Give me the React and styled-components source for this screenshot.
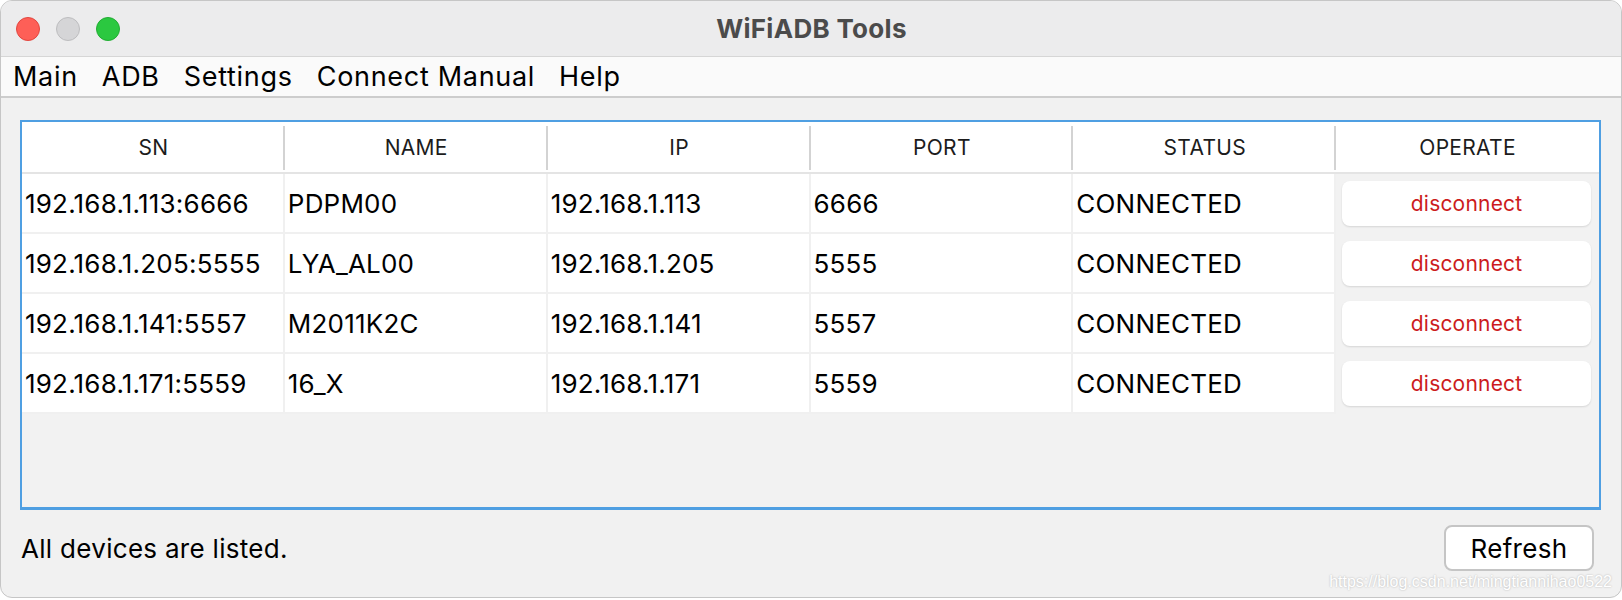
import styled, { createGlobalStyle } from "styled-components";

const GlobalStyle = createGlobalStyle`
  html, body {
    margin: 0;
    padding: 0;
    background: #ffffff;
  }
  * {
    box-sizing: border-box;
  }
`;

const Window = styled.div`
  position: relative;
  width: 1622px;
  height: 598px;
  display: flex;
  flex-direction: column;
  background: #f1f1f1;
  border: 1px solid #c6c6c6;
  border-radius: 12px;
  overflow: hidden;
  font-family: "Inter", "Noto Sans", sans-serif;
  color: #000;
`;

const TitleBar = styled.div`
  height: 56px;
  display: grid;
  grid-template-columns: 1fr auto 1fr;
  align-items: center;
  background: #ececed;
  border-bottom: 1px solid #d6d6d6;
  padding-left: 15px;
`;

const Lights = styled.div`
  display: flex;
  gap: 16px;
`;

const Light = styled.span`
  width: 24px;
  height: 24px;
  border-radius: 50%;
  background: ${p => p.$bg};
  border: 1px solid ${p => p.$edge};
`;

const Title = styled.div`
  font-size: 26px;
  font-weight: 700;
  letter-spacing: 0.3px;
  color: #4b4b4b;
  margin-right: 14px;
`;

const MenuBar = styled.div`
  height: 41px;
  display: flex;
  align-items: center;
  background: #fafafa;
  border-bottom: 2px solid #cdcdcd;
`;

const MenuItem = styled.span`
  font-size: 27px;
  letter-spacing: 0.7px;
  padding: 0 12px;
  line-height: 1;
`;

const Content = styled.div`
  flex: 1;
  display: flex;
  flex-direction: column;
  padding: 22px 20px 0 19px;
`;

const TableFrame = styled.div`
  height: 390px;
  border: 2px solid #4f9fe2;
  border-bottom-width: 3px;
  background: #f2f2f2;
  display: flex;
  flex-direction: column;
`;

const HeaderRow = styled.div`
  display: grid;
  grid-template-columns: repeat(6, 1fr);
  height: 52px;
  background: #ffffff;
  border-bottom: 2px solid #e4e4e4;
`;

const HeaderCell = styled.div`
  position: relative;
  display: flex;
  align-items: center;
  justify-content: center;
  font-size: 21px;
  letter-spacing: 0.3px;
  color: #1c1c1c;

  &:not(:last-child)::after {
    content: "";
    position: absolute;
    right: 0;
    top: 4px;
    bottom: 2px;
    width: 2px;
    background: #d3d3d3;
  }
`;

const Row = styled.div`
  display: grid;
  grid-template-columns: repeat(6, 1fr);
  height: 60px;
`;

const Cell = styled.div`
  display: flex;
  align-items: center;
  padding-left: 3px;
  font-size: 26px;
  letter-spacing: 0.2px;
  background: #ffffff;
  border-right: 2px solid #f0f0f0;
  border-bottom: 2px solid #f0f0f0;
  white-space: nowrap;
  overflow: hidden;
`;

const ActionCell = styled.div`
  display: flex;
  align-items: center;
  padding: 0 8px 2px 6px;
  background: #f2f2f2;
`;

const DisconnectButton = styled.button`
  width: 100%;
  height: 45px;
  border: none;
  border-radius: 8px;
  background: #ffffff;
  box-shadow: 0 1px 2px rgba(0, 0, 0, 0.12);
  font-family: "Inter", "Noto Sans", sans-serif;
  font-size: 21px;
  letter-spacing: 0.2px;
  color: #cc1b1d;
`;

const Footer = styled.div`
  display: flex;
  align-items: center;
  justify-content: space-between;
  padding: 15px 7px 0 1px;
`;

const StatusText = styled.span`
  font-size: 26px;
  letter-spacing: 0.3px;
`;

const RefreshButton = styled.button`
  width: 150px;
  height: 46px;
  background: #ffffff;
  border: 2px solid #c5c5c5;
  border-radius: 8px;
  font-family: "Inter", "Noto Sans", sans-serif;
  font-size: 26px;
  letter-spacing: 0.3px;
  color: #000;
`;

const Watermark = styled.span`
  position: absolute;
  right: 9px;
  bottom: 6px;
  font-family: "Liberation Sans", Arial, sans-serif;
  font-size: 16px;
  color: #ffffff;
  text-shadow: 0 0 2px rgba(0, 0, 0, 0.28);
`;

const columns = ["SN", "NAME", "IP", "PORT", "STATUS", "OPERATE"];

const devices = [
  { sn: "192.168.1.113:6666", name: "PDPM00", ip: "192.168.1.113", port: "6666" },
  { sn: "192.168.1.205:5555", name: "LYA_AL00", ip: "192.168.1.205", port: "5555" },
  { sn: "192.168.1.141:5557", name: "M2011K2C", ip: "192.168.1.141", port: "5557" },
  { sn: "192.168.1.171:5559", name: "16_X", ip: "192.168.1.171", port: "5559" },
];

export default function App() {
  return (
    <>
      <GlobalStyle />
      <Window>
        <TitleBar>
          <Lights>
            <Light $bg="#fe5f57" $edge="#e2463f" />
            <Light $bg="#d5d5d7" $edge="#bdbdbf" />
            <Light $bg="#2bc840" $edge="#22ad33" />
          </Lights>
          <Title>WiFiADB Tools</Title>
          <div />
        </TitleBar>

        <MenuBar>
          {["Main", "ADB", "Settings", "Connect Manual", "Help"].map((m) => (
            <MenuItem key={m}>{m}</MenuItem>
          ))}
        </MenuBar>

        <Content>
          <TableFrame>
            <HeaderRow>
              {columns.map((c) => (
                <HeaderCell key={c}>{c}</HeaderCell>
              ))}
            </HeaderRow>
            {devices.map((d) => (
              <Row key={d.sn}>
                <Cell>{d.sn}</Cell>
                <Cell>{d.name}</Cell>
                <Cell>{d.ip}</Cell>
                <Cell>{d.port}</Cell>
                <Cell>CONNECTED</Cell>
                <ActionCell>
                  <DisconnectButton>disconnect</DisconnectButton>
                </ActionCell>
              </Row>
            ))}
          </TableFrame>

          <Footer>
            <StatusText>All devices are listed.</StatusText>
            <RefreshButton>Refresh</RefreshButton>
          </Footer>
        </Content>

        <Watermark>https://blog.csdn.net/mingtiannihao0522</Watermark>
      </Window>
    </>
  );
}
